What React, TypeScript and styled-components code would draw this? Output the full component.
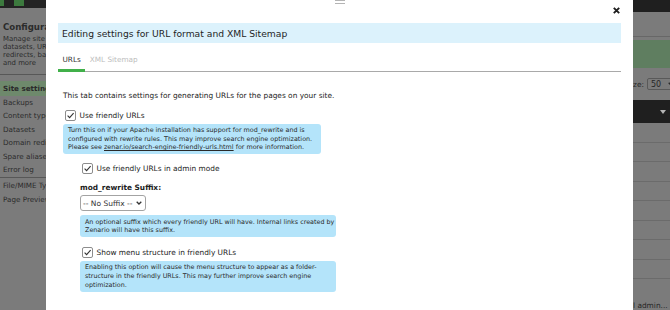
import React from "react";
import styled, { createGlobalStyle } from "styled-components";

const GlobalStyle = createGlobalStyle`
  html, body {
    margin: 0;
    padding: 0;
    background: #7b7b7b;
  }
  body {
    font-family: "DejaVu Sans", Verdana, sans-serif;
  }
`;

const Screen = styled.div`
  display: flex;
  width: 670px;
  height: 310px;
  overflow: hidden;
`;

/* ---------- dimmed page behind the dialog (left) ---------- */

const Sidebar = styled.div`
  width: 46px;
  flex: none;
  overflow: hidden;
  background: #7b7b7b;
  color: #2b2b2b;
  font-size: 7.2px;
  white-space: nowrap;
`;

const TopStrip = styled.div`
  height: 8px;
  background: #232323;
  display: flex;
  gap: 10px;
`;

const StripTile = styled.div<{ $w: number }>`
  width: ${p => p.$w}px;
  height: 6px;
  background: #3c7a3e;
`;

const SideTitle = styled.div`
  margin: 14px 3px 0;
  font-weight: bold;
  font-size: 8.6px;
  line-height: 10px;
`;

const SideDesc = styled.div`
  margin: 3px 3px 0;
  font-size: 6.9px;
  line-height: 8px;
`;

const SideRule = styled.div<{ $mt: number }>`
  margin-top: ${p => p.$mt}px;
  height: 1px;
  background: #575757;
`;

const SideActive = styled.div`
  margin-top: 6px;
  height: 15px;
  padding: 0 3px;
  display: flex;
  align-items: center;
  background: #6e896c;
  font-weight: bold;
`;

const SideItem = styled.div<{ $mt?: number }>`
  height: 13.4px;
  margin-top: ${p => p.$mt ?? 0}px;
  line-height: 13.4px;
  padding: 0 3px;
`;

/* ---------- dialog ---------- */

const Dialog = styled.div`
  width: 587px;
  flex: none;
  box-sizing: border-box;
  padding: 0 12px;
  background: #fff;
  color: #222;
  display: flex;
  flex-direction: column;
`;

const DialogTop = styled.div`
  height: 23px;
  display: grid;
  grid-template-columns: 1fr auto 1fr;
`;

const Handle = styled.div`
  grid-column: 2;
  width: 10px;
  height: 4px;
  display: flex;
  flex-direction: column;
  justify-content: space-between;
  span {
    display: block;
    height: 1px;
    background: #b4b4b4;
  }
`;

const CloseButton = styled.button`
  grid-column: 3;
  justify-self: end;
  align-self: start;
  margin: 7px 1px 0 0;
  padding: 0;
  border: 0;
  background: none;
  width: 7px;
  height: 7px;
  display: flex;
  cursor: pointer;
`;

const TitleBox = styled.div`
  height: 20px;
  padding-left: 4px;
  display: flex;
  align-items: center;
  background: #dcf2fc;
  font-size: 9.2px;
  color: #1f1f1f;
`;

const TabBar = styled.div`
  height: 28px;
  display: flex;
  align-items: flex-end;
  border-bottom: 1px solid #a9a9a9;
`;

const Tab = styled.div<{ $active?: boolean }>`
  margin-bottom: -1px;
  padding: 0 4.5px 5px;
  font-size: 7.3px;
  line-height: 9px;
  color: ${p => (p.$active ? "#333" : "#bdbdbd")};
  border-bottom: 3px solid ${p => (p.$active ? "#41b04a" : "transparent")};
`;

const Body = styled.div`
  padding: 0 5px;
  display: flex;
  flex-direction: column;
  align-items: flex-start;
  font-size: 7.4px;
`;

const Intro = styled.p`
  margin: 19px 0 0;
  line-height: 10px;
`;

const CheckRow = styled.label<{ $mt: number }>`
  margin-top: ${p => p.$mt}px;
  display: flex;
  align-items: center;
  gap: 3.5px;
  line-height: 11px;
  white-space: nowrap;
`;

const CheckBox = styled.span`
  width: 11px;
  height: 11px;
  margin-left: 2px;
  box-sizing: border-box;
  border: 1px solid #8d8d8d;
  border-radius: 2px;
  background: #fff;
  display: flex;
  align-items: center;
  justify-content: center;
`;

const Hint = styled.div<{ $w: number; $mt: number }>`
  width: ${p => p.$w}px;
  margin-top: ${p => p.$mt}px;
  box-sizing: border-box;
  padding: 2.3px 5px 2.3px;
  border-radius: 3px;
  background: #b4e4fa;
  color: #2a2a2a;
  font-size: 6.4px;
  line-height: 8.6px;
  white-space: nowrap;
  a {
    color: inherit;
  }
`;

const Nested = styled.div`
  margin-left: 17px;
  display: flex;
  flex-direction: column;
  align-items: flex-start;
`;

const FieldLabel = styled.div`
  margin-top: 9px;
  font-weight: bold;
  line-height: 10px;
`;

const SelectBox = styled.div`
  margin-top: 2px;
  width: 66px;
  height: 16px;
  box-sizing: border-box;
  padding: 0 3px 0 2px;
  border: 1px solid #a3a3a3;
  border-radius: 3px;
  background: #fff;
  display: flex;
  align-items: center;
  justify-content: space-between;
  font-size: 7.5px;
  color: #333;
`;

/* ---------- dimmed page behind the dialog (right) ---------- */

const RightPane = styled.div`
  flex: 1;
  min-width: 0;
  overflow: hidden;
  background: #7b7b7b;
  display: flex;
  flex-direction: column;
  color: #262626;
  font-size: 7.4px;
  white-space: nowrap;
`;

const DarkBar = styled.div<{ $h: number }>`
  height: ${p => p.$h}px;
  flex: none;
  background: #1f1f1f;
  display: flex;
  align-items: center;
  justify-content: flex-end;
  padding-right: 4px;
`;

const PlainBand = styled.div`
  height: 24px;
  flex: none;
  border-bottom: 1px solid #676767;
`;

const GreenBand = styled.div`
  margin-top: 3px;
  height: 28px;
  flex: none;
  background: #5f7e60;
`;

const Toolbar = styled.div`
  height: 32px;
  flex: none;
  display: flex;
  align-items: center;
  gap: 3px;
`;

const SizeSelect = styled.div`
  width: 30px;
  height: 12px;
  flex: none;
  box-sizing: border-box;
  padding: 0 2px 0 3px;
  border: 1px solid #595959;
  border-radius: 2px;
  display: flex;
  align-items: center;
  justify-content: space-between;
  font-size: 8px;
`;

const TableRow = styled.div<{ $last?: boolean; $plain?: boolean }>`
  height: ${p => (p.$last ? "auto" : "18.5px")};
  flex: none;
  padding-top: ${p => (p.$last ? "2px" : "0")};
  border-bottom: ${p => (p.$last || p.$plain ? "1px solid transparent" : "1px solid #6b6b6b")};
  line-height: 10px;
`;

const Chevron = ({ color = "#333" }: { color?: string }) => (
  <svg width="6" height="4" viewBox="0 0 6 4">
    <path d="M0.7 0.7 L3 3 L5.3 0.7" fill="none" stroke={color} strokeWidth="1.3" />
  </svg>
);

const Tick = () => (
  <svg width="9" height="9" viewBox="0 0 9 9">
    <path d="M1.6 4.6 L3.6 6.6 L7.6 2.2" fill="none" stroke="#333" strokeWidth="1.1" />
  </svg>
);

const Check = ({ mt, children }: { mt: number; children: React.ReactNode }) => (
  <CheckRow $mt={mt}>
    <CheckBox>
      <Tick />
    </CheckBox>
    {children}
  </CheckRow>
);

const sideItems = ["Backups", "Content types", "Datasets", "Domain redirects", "Spare aliases", "Error log"];

const App = () => {
  return (
    <>
      <GlobalStyle />
      <Screen>
        <Sidebar>
          <TopStrip>
            <StripTile $w={4} />
            <StripTile $w={10} />
          </TopStrip>
          <SideTitle>Configuration</SideTitle>
          <SideDesc>
            Manage site settings,
            <br />
            datasets, URL formats,
            <br />
            redirects, backups
            <br />
            and more
          </SideDesc>
          <SideRule $mt={7} />
          <SideActive>Site settings</SideActive>
          {sideItems.map(item => (
            <SideItem key={item}>{item}</SideItem>
          ))}
          <SideRule $mt={0.5} />
          <SideItem $mt={1.5}>File/MIME Types</SideItem>
          <SideItem>Page Preview</SideItem>
        </Sidebar>

        <Dialog>
          <DialogTop>
            <Handle>
              <span />
              <span />
            </Handle>
            <CloseButton aria-label="Close">
              <svg width="7" height="7" viewBox="0 0 7 7">
                <path d="M0.8 0.8 L6.2 6.2 M6.2 0.8 L0.8 6.2" stroke="#1e1e1e" strokeWidth="1.9" />
              </svg>
            </CloseButton>
          </DialogTop>
          <TitleBox>Editing settings for URL format and XML Sitemap</TitleBox>
          <TabBar>
            <Tab $active>URLs</Tab>
            <Tab>XML Sitemap</Tab>
          </TabBar>
          <Body>
            <Intro>This tab contains settings for generating URLs for the pages on your site.</Intro>
            <Check mt={9}>Use friendly URLs</Check>
            <Hint $w={258} $mt={3}>
              Turn this on if your Apache installation has support for mod_rewrite and is
              <br />
              configured with rewrite rules. This may improve search engine optimization.
              <br />
              Please see <a href="#">zenar.io/search-engine-friendly-urls.html</a> for more information.
            </Hint>
            <Nested>
              <Check mt={9}>Use friendly URLs in admin mode</Check>
              <FieldLabel>mod_rewrite Suffix:</FieldLabel>
              <SelectBox>
                <span>-- No Suffix --</span>
                <Chevron />
              </SelectBox>
              <Hint $w={256} $mt={4}>
                An optional suffix which every friendly URL will have. Internal links created by
                <br />
                Zenario will have this suffix.
              </Hint>
              <Check mt={10}>Show menu structure in friendly URLs</Check>
              <Hint $w={256} $mt={3}>
                Enabling this option will cause the menu structure to appear as a folder-
                <br />
                structure in the friendly URLs. This may further improve search engine
                <br />
                optimization.
              </Hint>
            </Nested>
          </Body>
        </Dialog>

        <RightPane>
          <DarkBar $h={12} />
          <PlainBand />
          <GreenBand />
          <Toolbar>
            <span>ze:</span>
            <SizeSelect>
              <span>50</span>
              <Chevron color="#2a2a2a" />
            </SizeSelect>
          </Toolbar>
          <DarkBar $h={23}>
            <svg width="6" height="4" viewBox="0 0 6 4">
              <path d="M0 0 L6 0 L3 4 Z" fill="#b5b5b5" />
            </svg>
          </DarkBar>
          {Array.from({ length: 9 }).map((_, i) => (
            <TableRow key={i} $plain={i === 8} />
          ))}
          <TableRow $last>l admin...</TableRow>
        </RightPane>
      </Screen>
    </>
  );
};

export default App;
